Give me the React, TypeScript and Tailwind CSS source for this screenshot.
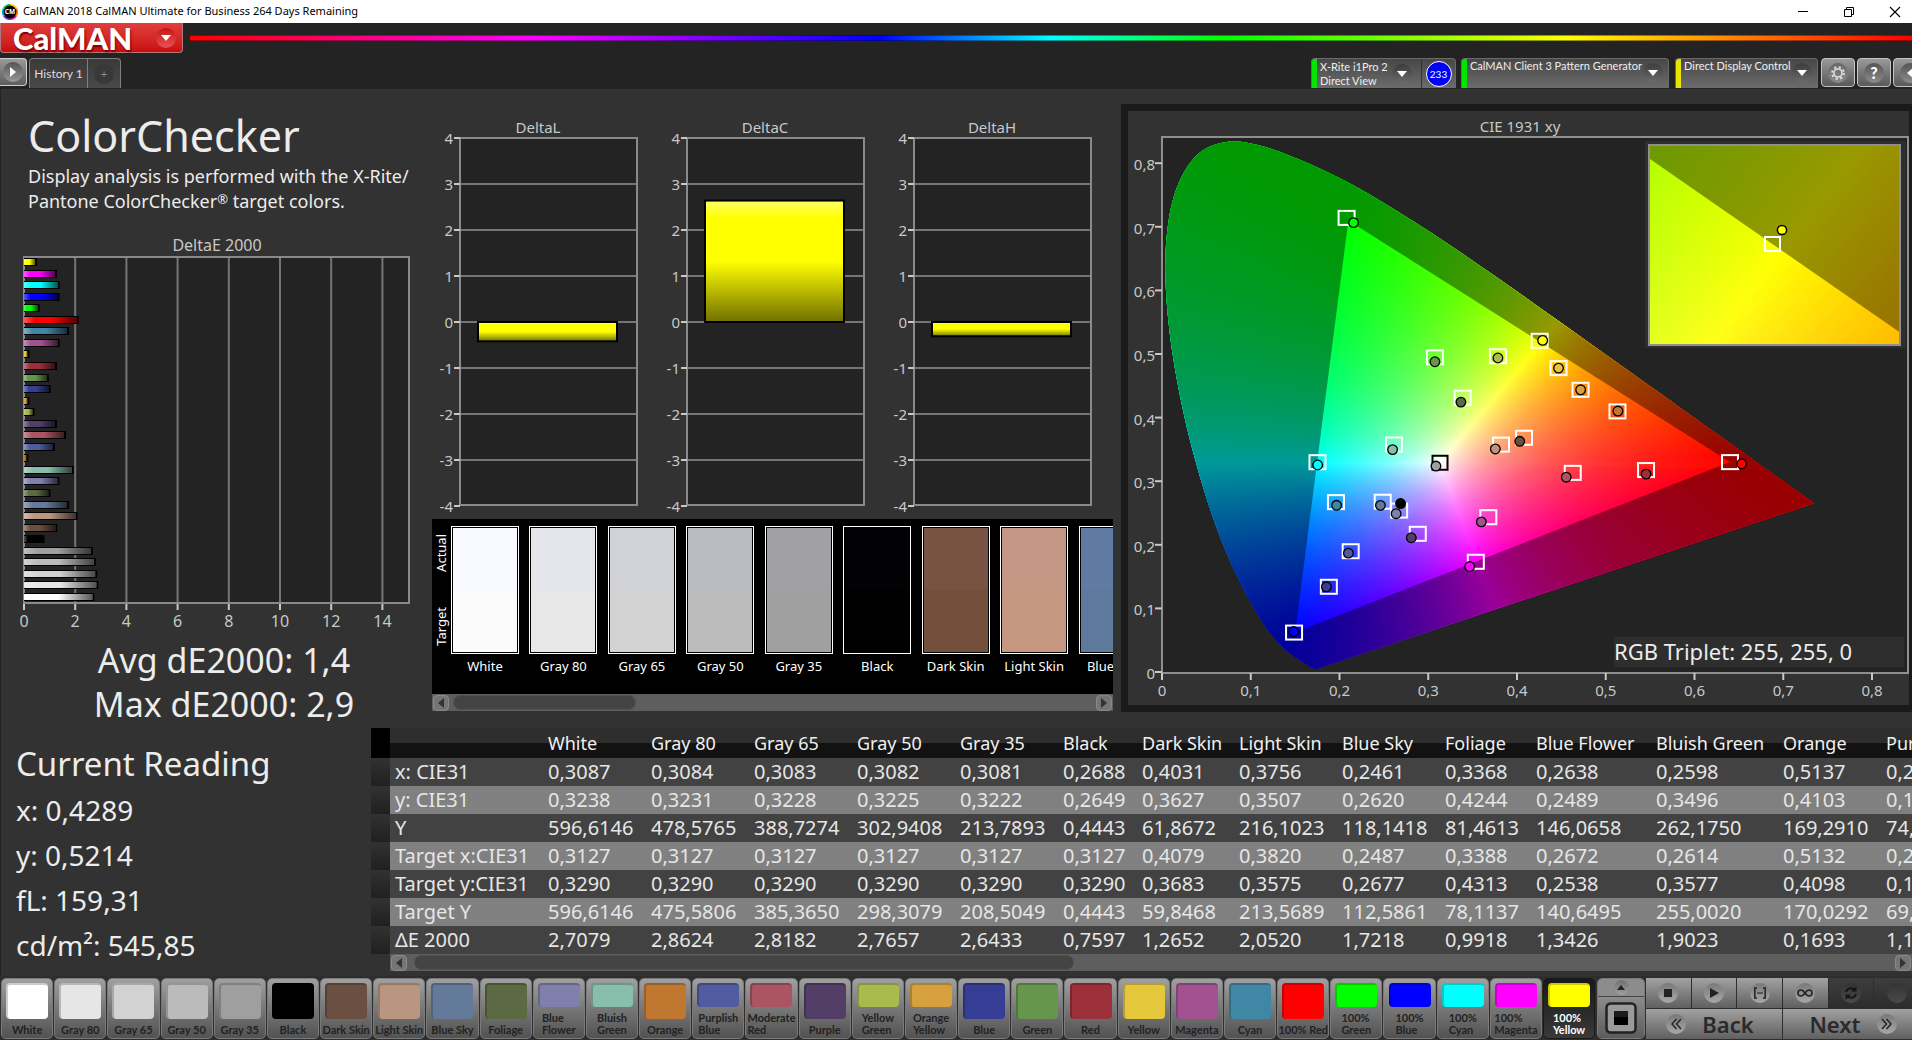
import React from 'react';

type Pt = [number, number];

const PATCHES: { name: string; lines: string[]; color: string; de: number }[] = [
  { name: 'White', lines: ['White'], color: '#ffffff', de: 2.7079 },
  { name: 'Gray 80', lines: ['Gray 80'], color: '#e6e6e6', de: 2.8624 },
  { name: 'Gray 65', lines: ['Gray 65'], color: '#d2d2d2', de: 2.8182 },
  { name: 'Gray 50', lines: ['Gray 50'], color: '#bbbbbb', de: 2.7657 },
  { name: 'Gray 35', lines: ['Gray 35'], color: '#9f9f9f', de: 2.6433 },
  { name: 'Black', lines: ['Black'], color: '#000000', de: 0.7597 },
  { name: 'Dark Skin', lines: ['Dark Skin'], color: '#6b5042', de: 1.2652 },
  { name: 'Light Skin', lines: ['Light Skin'], color: '#ba9580', de: 2.052 },
  { name: 'Blue Sky', lines: ['Blue Sky'], color: '#647a9a', de: 1.7218 },
  { name: 'Foliage', lines: ['Foliage'], color: '#5c6a43', de: 0.9918 },
  { name: 'Blue Flower', lines: ['Blue', 'Flower'], color: '#8080ad', de: 1.3426 },
  { name: 'Bluish Green', lines: ['Bluish', 'Green'], color: '#87bfac', de: 1.9023 },
  { name: 'Orange', lines: ['Orange'], color: '#c07730', de: 0.13 },
  { name: 'Purplish Blue', lines: ['Purplish', 'Blue'], color: '#4f5ca0', de: 1.17 },
  { name: 'Moderate Red', lines: ['Moderate', 'Red'], color: '#ab5462', de: 1.6 },
  { name: 'Purple', lines: ['Purple'], color: '#523e66', de: 1.25 },
  { name: 'Yellow Green', lines: ['Yellow', 'Green'], color: '#a9bb4c', de: 0.37 },
  { name: 'Orange Yellow', lines: ['Orange', 'Yellow'], color: '#d6a13c', de: 0.17 },
  { name: 'Blue', lines: ['Blue'], color: '#363d94', de: 1.0 },
  { name: 'Green', lines: ['Green'], color: '#66954c', de: 0.93 },
  { name: 'Red', lines: ['Red'], color: '#9b2f3a', de: 1.25 },
  { name: 'Yellow', lines: ['Yellow'], color: '#e4c73a', de: 0.17 },
  { name: 'Magenta', lines: ['Magenta'], color: '#a35291', de: 1.35 },
  { name: 'Cyan', lines: ['Cyan'], color: '#4087a6', de: 1.72 },
  { name: '100% Red', lines: ['100% Red'], color: '#ff0000', de: 2.1 },
  { name: '100% Green', lines: ['100%', 'Green'], color: '#00ff00', de: 0.57 },
  { name: '100% Blue', lines: ['100%', 'Blue'], color: '#0000ff', de: 1.35 },
  { name: '100% Cyan', lines: ['100%', 'Cyan'], color: '#00ffff', de: 1.35 },
  { name: '100% Magenta', lines: ['100%', 'Magenta'], color: '#ff00ff', de: 1.25 },
  { name: '100% Yellow', lines: ['100%', 'Yellow'], color: '#ffff00', de: 0.47 },
];

/* ---------- CIE diagram geometry ---------- */

const px = (x: number) => 1162 + x * 887.5;
const py = (y: number) => 672 - y * 636;

const PRIM: Pt[] = [[0.64, 0.33], [0.21, 0.71], [0.15, 0.062]];
const WHITE: Pt = [0.3127, 0.329];

const LOCUS: Pt[] = [
  [0.1741, 0.005], [0.1714, 0.0051], [0.1644, 0.0109], [0.1566, 0.0177], [0.144, 0.0297], [0.1241, 0.0578],
  [0.1096, 0.0868], [0.0913, 0.1327], [0.0687, 0.2007], [0.0454, 0.295], [0.0235, 0.4127], [0.0082, 0.5384],
  [0.0039, 0.6548], [0.0139, 0.7502], [0.0389, 0.812], [0.0743, 0.8338], [0.1142, 0.8262], [0.1547, 0.8059],
  [0.1929, 0.7816], [0.2296, 0.7543], [0.3016, 0.6923], [0.3731, 0.6245], [0.4441, 0.5547], [0.5125, 0.4866],
  [0.5752, 0.4242], [0.627, 0.3725], [0.6915, 0.3083], [0.7347, 0.2653],
];

function smoothPath(points: Pt[]) {
  const p = points.map(([x, y]) => [px(x), py(y)] as Pt);
  let d = `M${p[0][0]} ${p[0][1]}`;
  for (let i = 0; i < p.length - 1; i++) {
    const a = p[Math.max(i - 1, 0)];
    const b = p[i];
    const c = p[i + 1];
    const e = p[Math.min(i + 2, p.length - 1)];
    d += `C${b[0] + (c[0] - a[0]) / 6} ${b[1] + (c[1] - a[1]) / 6} ${c[0] - (e[0] - b[0]) / 6} ${c[1] - (e[1] - b[1]) / 6} ${c[0]} ${c[1]}`;
  }
  return d + 'Z';
}
const LOCUS_PATH = smoothPath(LOCUS);
const TRIANGLE_PATH = 'M' + PRIM.map(([x, y]) => `${px(x)} ${py(y)}`).join('L') + 'Z';

function bary([x, y]: Pt) {
  const [[x1, y1], [x2, y2], [x3, y3]] = PRIM;
  const det = (y2 - y3) * (x1 - x3) + (x3 - x2) * (y1 - y3);
  const a = ((y2 - y3) * (x - x3) + (x3 - x2) * (y - y3)) / det;
  const b = ((y3 - y1) * (x - x3) + (x1 - x3) * (y - y3)) / det;
  return [a, b, 1 - a - b];
}
const WB = bary(WHITE);

function colorAt(p: Pt) {
  const lin = bary(p).map((v, i) => Math.max(0, v / WB[i]));
  const top = Math.max(...lin);
  return `rgb(${lin.map((v) => Math.round((255 * v) / top)).join(',')})`;
}

const WEDGES = 480;
const STOPS = [0, 0.08, 0.2, 0.4, 0.6, 0.8, 1, 1.4, 2, 2.8];
const FIELD = Array.from({ length: WEDGES }, (_, i) => {
  const step = (2 * Math.PI) / WEDGES;
  const t = i * step;
  const dx = Math.cos(t) / 887.5;
  const dy = -Math.sin(t) / 636;
  const far = bary([WHITE[0] + dx, WHITE[1] + dy]);
  const edge = Math.min(...far.map((v, k) => (v < WB[k] ? WB[k] / (WB[k] - v) : Infinity)));
  const cx = px(WHITE[0]);
  const cy = py(WHITE[1]);
  const ray = (a: number) => `${cx + 900 * Math.cos(a)} ${cy + 900 * Math.sin(a)}`;
  return {
    r: edge * 2.8,
    d: `M${cx} ${cy}L${ray(t - step * 0.5)}L${ray(t + step * (i === WEDGES - 1 ? 0.5 : 3.5))}Z`,
    stops: STOPS.map((s) => ({
      o: s / 2.8,
      c: colorAt([WHITE[0] + dx * edge * s, WHITE[1] + dy * edge * s]),
    })),
  };
});

const TARGETS: Pt[] = [
  [0.208, 0.714], [0.4255, 0.5208], [0.3075, 0.4947], [0.3785, 0.4965], [0.4468, 0.4778], [0.4716, 0.4437],
  [0.5132, 0.4098], [0.3388, 0.4313], [0.2614, 0.3577], [0.1752, 0.3299], [0.382, 0.3575], [0.4079, 0.3683],
  [0.64, 0.33], [0.5454, 0.3175], [0.4628, 0.3131], [0.196, 0.2671], [0.2487, 0.2677], [0.2672, 0.2538],
  [0.3677, 0.2434], [0.2882, 0.2173], [0.2126, 0.1899], [0.3536, 0.1733], [0.188, 0.134], [0.1488, 0.062],
];
const MEASURED: [number, number, string][] = [
  [0.2158, 0.7066, '#00ff00'], [0.4289, 0.5214, '#ffff00'], [0.3075, 0.4878, '#66954c'], [0.3785, 0.4937, '#a9bb4c'],
  [0.4468, 0.4778, '#e4c73a'], [0.4717, 0.4437, '#d6a13c'], [0.5137, 0.4103, '#c07730'], [0.3368, 0.4244, '#5c6a43'],
  [0.2598, 0.3496, '#87bfac'], [0.1754, 0.3255, '#00ffff'], [0.3087, 0.3238, '#9f9f9f'], [0.3756, 0.3507, '#ba9580'],
  [0.4031, 0.3627, '#6b5042'], [0.6532, 0.3274, '#ff0000'], [0.5454, 0.3112, '#9b2f3a'], [0.4555, 0.3063, '#ab5462'],
  [0.1967, 0.2621, '#4087a6'], [0.2461, 0.262, '#647a9a'], [0.2688, 0.2649, '#000000'], [0.2638, 0.2489, '#8080ad'],
  [0.3598, 0.236, '#a35291'], [0.2809, 0.2111, '#523e66'], [0.21, 0.1869, '#4f5ca0'], [0.3466, 0.1658, '#ff00ff'],
  [0.1852, 0.134, '#363d94'], [0.1483, 0.0637, '#0000ff'],
];

function CieChart() {
  const ticks = [0, 1, 2, 3, 4, 5, 6, 7, 8];
  const label = (n: number) => (n === 0 ? '0' : `0,${n}`);
  return (
    <svg viewBox="1128 111 781 594" className="block w-full text-[15px]" role="img" aria-label="CIE 1931 xy">
      <defs>
        {FIELD.map((w, i) => (
          <radialGradient key={i} id={`w${i}`} gradientUnits="userSpaceOnUse" cx={px(WHITE[0])} cy={py(WHITE[1])} r={w.r}>
            {w.stops.map((s, k) => (
              <stop key={k} offset={s.o} stopColor={s.c} />
            ))}
          </radialGradient>
        ))}
        <clipPath id="locus"><path d={LOCUS_PATH} /></clipPath>
        <clipPath id="inset"><rect x="1650" y="146" width="249" height="198" /></clipPath>
        <g id="field">
          <circle cx={px(WHITE[0])} cy={py(WHITE[1])} r="40" fill="#fff" />
          {FIELD.map((w, i) => (
            <path key={i} d={w.d} fill={`url(#w${i})`} />
          ))}
          <path d={`M700 -300H2500V1200H700Z${TRIANGLE_PATH}`} fillRule="evenodd" fill="#000" opacity="0.4" />
        </g>
      </defs>
      <text x="1520" y="132" textAnchor="middle" fill="#c8c8c8">CIE 1931 xy</text>
      <rect x="1162" y="137" width="746" height="536" fill="#232323" stroke="#8f8f8f" strokeWidth="2" />
      <g clipPath="url(#locus)"><use href="#field" /></g>
      {ticks.map((n) => (
        <g key={n} fill="#c8c8c8">
          <rect x="1155" y={py(n / 10) - 1} width="7" height="2" />
          <rect x={px(n / 10) - 1} y="673" width="2" height="7" />
          <text x="1155" y={py(n / 10) + 7} textAnchor="end">{label(n)}</text>
          <text x={px(n / 10)} y="696" textAnchor="middle">{label(n)}</text>
        </g>
      ))}
      {TARGETS.map(([x, y], i) => (
        <rect key={i} x={px(x) - 8} y={py(y) - 7} width="16" height="14" fill="none" stroke="#fff" strokeWidth="2" />
      ))}
      <rect x={px(WHITE[0]) - 7} y={py(WHITE[1]) - 7} width="15" height="14" fill="none" stroke="#000" strokeWidth="2" />
      {MEASURED.map(([x, y, c], i) => (
        <circle key={i} cx={px(x)} cy={py(y)} r="4.8" fill={c} stroke="#000" strokeWidth="1.3" />
      ))}
      <rect x="1645" y="141" width="261" height="207" fill="#2e2e2e" />
      <g clipPath="url(#inset)">
        <g transform="translate(1772 243) scale(4.2 4.6) translate(-1539 -341)"><use href="#field" /></g>
      </g>
      <rect x="1649" y="145" width="251" height="200" fill="none" stroke="#8f8f8f" strokeWidth="2" />
      <rect x="1765" y="237" width="15" height="14" fill="none" stroke="#fff" strokeWidth="2" />
      <circle cx="1782" cy="230" r="4.6" fill="#ffff00" stroke="#000" strokeWidth="1.5" />
      <rect x="1614" y="637" width="290" height="30" fill="#2e2e2e" />
      <text x="1614" y="660" fontSize="22" fill="#ececec">RGB Triplet: 255, 255, 0</text>
    </svg>
  );
}

/* ---------- Delta charts ---------- */

function DeltaEChart() {
  const unit = 25.6;
  const bars = [...PATCHES].reverse();
  return (
    <svg viewBox="0 235 432 400" width="432" height="400" className="block text-[16px]" role="img" aria-label="DeltaE 2000">
      <defs>
        <linearGradient id="hshade">
          <stop offset="0" stopColor="#fff" stopOpacity="0.35" />
          <stop offset="0.2" stopColor="#fff" stopOpacity="0" />
          <stop offset="0.5" stopColor="#000" stopOpacity="0" />
          <stop offset="1" stopColor="#000" stopOpacity="0.65" />
        </linearGradient>
      </defs>
      <text x="217" y="251" textAnchor="middle" fill="#c8c8c8">DeltaE 2000</text>
      <rect x="24" y="257" width="385" height="346" fill="#232323" stroke="#8a8a8a" strokeWidth="2" />
      {[0, 2, 4, 6, 8, 10, 12, 14].map((n) => (
        <g key={n}>
          {n > 0 && <rect x={23 + n * unit} y="258" width="2" height="344" fill="#757575" />}
          <rect x={23 + n * unit} y="604" width="2" height="6" fill="#c8c8c8" />
          <text x={24 + n * unit} y="627" textAnchor="middle" fill="#c8c8c8">{n}</text>
        </g>
      ))}
      {bars.map((b, i) => {
        const y = 258 + Math.round(i * 11.55);
        const w = Math.max(b.de * unit, 3);
        return (
          <g key={b.name}>
            <rect x="24" y={y} width={w + 1} height="8" fill="#000" />
            <rect x="24" y={y + 1} width={w - 1} height="6" fill={b.color} />
            <rect x="24" y={y + 1} width={w - 1} height="6" fill="url(#hshade)" />
          </g>
        );
      })}
    </svg>
  );
}

function DeltaChart({ title, value }: { title: string; value: number }) {
  const y = (v: number) => 322 - v * 46;
  const top = value > 0 ? y(value) : 322;
  const h = Math.abs(value) * 46;
  return (
    <svg viewBox="0 115 227 400" className="block min-w-0 flex-1 text-[15px]" role="img" aria-label={title}>
      <defs>
        <linearGradient id="vshade" x1="0" y1="0" x2="0" y2="1">
          <stop offset="0" stopColor="#ffff66" />
          <stop offset="0.15" stopColor="#ffff00" />
          <stop offset="0.5" stopColor="#ffff00" />
          <stop offset="1" stopColor="#707000" />
        </linearGradient>
      </defs>
      <text x="106" y="133" textAnchor="middle" fill="#c8c8c8">{title}</text>
      <rect x="28" y="138" width="177" height="367" fill="#232323" stroke="#8a8a8a" strokeWidth="2" />
      {[4, 3, 2, 1, 0, -1, -2, -3, -4].map((n) => (
        <g key={n}>
          {Math.abs(n) < 4 && <rect x="29" y={y(n) - 1} width="175" height="2" fill="#757575" />}
          <rect x="22" y={y(n) - 1} width="6" height="2" fill="#c8c8c8" />
          <text x="21" y={y(n) + 6} textAnchor="end" fill="#c8c8c8">{n}</text>
        </g>
      ))}
      <rect x="46" y={top} width="139" height={h} fill="url(#vshade)" stroke="#000" strokeWidth="2" />
    </svg>
  );
}

/* ---------- Swatch strip ---------- */

const STRIP = [
  { name: 'White', actual: '#f8faff', target: '#fbfbfb' },
  { name: 'Gray 80', actual: '#e5e6eb', target: '#e7e7e7' },
  { name: 'Gray 65', actual: '#d0d2d7', target: '#d3d3d3' },
  { name: 'Gray 50', actual: '#babcc2', target: '#bcbcbc' },
  { name: 'Gray 35', actual: '#a1a0a5', target: '#a0a0a0' },
  { name: 'Black', actual: '#020204', target: '#000000' },
  { name: 'Dark Skin', actual: '#775344', target: '#73503c' },
  { name: 'Light Skin', actual: '#c49785', target: '#c59680' },
  { name: 'Blue Sky', actual: '#5f7ba3', target: '#5d7a9c' },
];

function ScrollBar({ label, thumb }: { label: string; thumb: string }) {
  const btn = 'flex h-4 w-4 shrink-0 items-center justify-center rounded border border-[#8a8a8a] bg-[#757575]';
  return (
    <div className="flex h-[17px] items-center gap-1 bg-[#5e5e5e] px-px" role="group" aria-label={label}>
      <button className={btn} aria-label="Scroll left">
        <svg width="6" height="10" viewBox="0 0 6 10"><path d="M6 0v10L0 5z" fill="#333" /></svg>
      </button>
      <div className="flex-1">
        <div className={`h-[15px] rounded-lg border border-[#505050] bg-[#444] ${thumb}`} />
      </div>
      <button className={btn} aria-label="Scroll right">
        <svg width="6" height="10" viewBox="0 0 6 10"><path d="M0 0v10l6-5z" fill="#333" /></svg>
      </button>
    </div>
  );
}

function SwatchStrip() {
  return (
    <div className="mt-1 bg-black">
      <div className="flex h-[175px] overflow-hidden pt-[7px] text-[13px] text-white">
        <div className="flex h-32 w-[19px] shrink-0 flex-col items-start justify-between py-2 pl-px leading-4">
          <span className="rotate-180 [writing-mode:vertical-rl]">Actual</span>
          <span className="rotate-180 [writing-mode:vertical-rl]">Target</span>
        </div>
        <div className="grid w-[706px] shrink-0 grid-cols-9">
          {STRIP.map((s) => (
            <div key={s.name} className="w-[68px]">
              <div className="flex h-32 flex-col border border-white">
                <div className="flex flex-1 flex-col border border-black/25">
                  <div className="flex-1" style={{ background: s.actual }} />
                  <div className="flex-1" style={{ background: s.target }} />
                </div>
              </div>
              <div className="mt-1 text-center leading-4 whitespace-nowrap">{s.name}</div>
            </div>
          ))}
        </div>
      </div>
      <ScrollBar label="Swatches" thumb="w-[183px]" />
    </div>
  );
}

/* ---------- Data table ---------- */

const HEADS = ['White', 'Gray 80', 'Gray 65', 'Gray 50', 'Gray 35', 'Black', 'Dark Skin', 'Light Skin', 'Blue Sky', 'Foliage', 'Blue Flower', 'Bluish Green', 'Orange', 'Purplish Blue'];
const COLS = [103, 103, 103, 103, 103, 79, 97, 103, 103, 91, 120, 127, 103, 140];
const ROWS: [string, string[]][] = [
  ['x: CIE31', ['0,3087', '0,3084', '0,3083', '0,3082', '0,3081', '0,2688', '0,4031', '0,3756', '0,2461', '0,3368', '0,2638', '0,2598', '0,5137', '0,2100']],
  ['y: CIE31', ['0,3238', '0,3231', '0,3228', '0,3225', '0,3222', '0,2649', '0,3627', '0,3507', '0,2620', '0,4244', '0,2489', '0,3496', '0,4103', '0,1869']],
  ['Y', ['596,6146', '478,5765', '388,7274', '302,9408', '213,7893', '0,4443', '61,8672', '216,1023', '118,1418', '81,4613', '146,0658', '262,1750', '169,2910', '74,1120']],
  ['Target x:CIE31', ['0,3127', '0,3127', '0,3127', '0,3127', '0,3127', '0,3127', '0,4079', '0,3820', '0,2487', '0,3388', '0,2672', '0,2614', '0,5132', '0,2126']],
  ['Target y:CIE31', ['0,3290', '0,3290', '0,3290', '0,3290', '0,3290', '0,3290', '0,3683', '0,3575', '0,2677', '0,4313', '0,2538', '0,3577', '0,4098', '0,1899']],
  ['Target Y', ['596,6146', '475,5806', '385,3650', '298,3079', '208,5049', '0,4443', '59,8468', '213,5689', '112,5861', '78,1137', '140,6495', '255,0020', '170,0292', '69,8240']],
  ['ΔE 2000', ['2,7079', '2,8624', '2,8182', '2,7657', '2,6433', '0,7597', '1,2652', '2,0520', '1,7218', '0,9918', '1,3426', '1,9023', '0,1693', '1,1700']],
];

function DataTable() {
  return (
    <div className="col-span-3 col-start-2 min-w-0 overflow-hidden">
      <table className="w-[1650px] table-fixed border-collapse text-left text-[20px] whitespace-nowrap text-[#e6e6e6]">
        <colgroup>
          <col style={{ width: 19 }} />
          <col style={{ width: 153 }} />
          {COLS.map((w, i) => (
            <col key={i} style={{ width: w }} />
          ))}
        </colgroup>
        <thead>
          <tr className="h-[30px] bg-linear-to-b from-[#2e2e2e] from-50% to-[#121212] to-50% text-[18px] leading-7 text-[#f0f0f0]">
            <td className="bg-black p-0" />
            <td className="p-0" />
            {HEADS.map((h) => (
              <th key={h} scope="col" className="py-0 pr-0 pl-[5px] font-normal">{h}</th>
            ))}
          </tr>
        </thead>
        <tbody>
          {ROWS.map(([name, cells]) => (
            <tr key={name} className="h-7 bg-[#424242] leading-7 even:bg-[#808080]">
              <td className="bg-linear-to-b from-[#323232] to-[#202020] p-0" />
              <th scope="row" className="py-0 pr-0 pl-[5px] font-normal">{name}</th>
              {cells.map((c, i) => (
                <td key={i} className="py-0 pr-0 pl-[5px]">{c}</td>
              ))}
            </tr>
          ))}
        </tbody>
      </table>
      <div className="ml-[19px]">
        <ScrollBar label="Readings" thumb="ml-[3px] w-[660px]" />
      </div>
    </div>
  );
}

/* ---------- Header ---------- */

function Drop({ className = '' }: { className?: string }) {
  return (
    <span className={`flex h-5 w-5 shrink-0 items-center justify-center rounded-full bg-linear-to-b from-[#3c3c3c] to-[#6c6c6c] ${className}`}>
      <svg width="10" height="6" viewBox="0 0 10 6"><path d="M0 0h10L5 6z" fill="#fff" /></svg>
    </span>
  );
}

function TitleBar() {
  return (
    <div className="flex h-[23px] items-center bg-white text-black">
      <svg width="16" height="16" viewBox="0 0 16 16" className="ml-[2px]">
        <path d="M8 0a8 8 0 0 1 7 4L8 8z" fill="#f5d000" />
        <path d="M15 4a8 8 0 0 1 0 8L8 8z" fill="#ff7a00" />
        <path d="M15 12a8 8 0 0 1-7 4V8z" fill="#e0119d" />
        <path d="M8 16a8 8 0 0 1-7-4l7-4z" fill="#5b35e0" />
        <path d="M1 12a8 8 0 0 1 0-8l7 4z" fill="#00a6e0" />
        <path d="M1 4a8 8 0 0 1 7-4v8z" fill="#19c23c" />
        <circle cx="8" cy="8" r="6.4" fill="#000" />
        <text x="8" y="10.4" textAnchor="middle" fontSize="6.5" fontWeight="700" fill="#fff">CM</text>
      </svg>
      <h1 className="ml-[5px] text-[11px]">CalMAN 2018 CalMAN Ultimate for Business 264 Days Remaining</h1>
      <div className="mr-[11px] ml-auto flex gap-[34px]">
        <button aria-label="Minimize"><svg width="12" height="12" viewBox="0 0 12 12"><path d="M1 5.500h10" stroke="#000" /></svg></button>
        <button aria-label="Restore"><svg width="12" height="12" viewBox="0 0 12 12" fill="none" stroke="#000"><path d="M1.500 3.500h7v7h-7zM3.500 3.500v-2h7v7h-2" /></svg></button>
        <button aria-label="Close"><svg width="12" height="12" viewBox="0 0 12 12"><path d="M1 1l10 10M11 1L1 11" stroke="#000" strokeWidth="1.100" /></svg></button>
      </div>
    </div>
  );
}

function Header() {
  const device = 'flex rounded-t border-x border-t border-[#6a6a6a] bg-linear-to-b from-[#474747] to-[#6c6c6c] text-left leading-[14px] text-[#eee] overflow-hidden';
  const square = 'flex h-[29px] w-[34px] shrink-0 items-center justify-center rounded border border-[#c4c4c4] bg-linear-to-b from-[#999] to-[#5a5a5a]';
  return (
    <header className="bg-[#232323]">
      <div className="flex h-[35px]">
        <button className="flex h-[30px] w-[183px] items-center justify-between rounded-b border border-t-0 border-[#b07a7a] bg-linear-to-b from-[#e23c3c] to-[#c80c0c] pr-[6px] pl-3 [font-family:Lato,sans-serif] text-[31px] leading-[28px] font-black text-white">
          <span className="[text-shadow:1px_2px_2px_#7a0000]">CalMAN</span>
          <span className="flex h-5 w-5 items-center justify-center rounded-full bg-linear-to-b from-[#c41010] to-[#e85050]">
            <svg width="10" height="6" viewBox="0 0 10 6"><path d="M0 0h10L5 6z" fill="#fff" /></svg>
          </span>
        </button>
        <div className="mt-3 ml-[7px] h-[6px] flex-1 border-y border-black/40 bg-[linear-gradient(to_right,#f00,#f0f_20%,#00f_40%,#0ff_50%,#0f0_60%,#ff0_80%,#f00)]" />
      </div>
      <div className="flex h-[31px] overflow-hidden [font-family:Lato,sans-serif]">
        <button aria-label="Show workflow" className="flex h-[28px] w-[27px] items-center justify-center rounded-r border border-l-0 border-[#d0d0d0] bg-linear-to-b from-[#9a9a9a] to-[#5e5e5e]">
          <span className="flex h-5 w-5 items-center justify-center rounded-full bg-linear-to-b from-[#555] to-[#9a9a9a]">
            <svg width="6" height="10" viewBox="0 0 6 10"><path d="M0 0v10l6-5z" fill="#fff" /></svg>
          </span>
        </button>
        <div className="ml-[2px] flex h-[30px] rounded-t border-x border-t border-[#808080] bg-linear-to-b from-[#3a3a3a] to-[#484848] text-[12px] text-[#ddd]">
          <button className="w-[58px] border-r border-[#808080]">History 1</button>
          <button aria-label="Add history" className="flex w-8 items-center justify-center text-[#888]">
            <span className="flex h-5 w-5 items-center justify-center rounded-full bg-[#383838]">+</span>
          </button>
        </div>
        <div className="ml-auto flex h-[30px] text-[11px]">
          <div className={`${device} w-[145px]`}>
            <span className="w-[5px] bg-[#00e600]" />
            <button className="flex flex-1 items-center justify-between pr-[9px] pl-[3px] text-left">
              <span className="whitespace-nowrap">X-Rite i1Pro 2<br />Direct View</span>
              <Drop />
            </button>
            <span className="flex w-[34px] items-center justify-center border-l border-[#333]">
              <span className="flex h-[26px] w-[26px] items-center justify-center rounded-full border border-white bg-[#0000ff] text-[10px] text-white">233</span>
            </span>
          </div>
          <div className={`${device} ml-[5px] w-[208px]`}>
            <span className="w-[5px] bg-[#00e600]" />
            <button className="flex flex-1 justify-between pr-[5px] pl-[3px] text-left whitespace-nowrap">
              CalMAN Client 3 Pattern Generator
              <Drop className="mt-1" />
            </button>
          </div>
          <div className={`${device} ml-[6px] w-[143px]`}>
            <span className="w-[5px] bg-[#e6e600]" />
            <button className="flex flex-1 justify-between pr-[5px] pl-[3px] text-left whitespace-nowrap">
              Direct Display Control
              <Drop className="mt-1" />
            </button>
          </div>
          <div className="ml-[3px] flex w-[91px] gap-[2px] overflow-hidden">
            <button aria-label="Settings" className={square}>
              <span className="flex h-5 w-5 items-center justify-center rounded-full bg-linear-to-b from-[#666] to-[#8c8c8c]">
                <svg width="16" height="16" viewBox="0 0 16 16" fill="none" stroke="#ddd">
                  <circle cx="8" cy="8" r="4" strokeWidth="1.600" />
                  <circle cx="8" cy="8" r="5.900" strokeWidth="2" strokeDasharray="2.300 2.330" />
                </svg>
              </span>
            </button>
            <button aria-label="Help" className={square}>
              <span className="flex h-5 w-5 items-center justify-center rounded-full bg-linear-to-b from-[#555] to-[#8c8c8c] text-[16px] font-black text-white">?</span>
            </button>
            <button aria-label="Collapse" className={square}>
              <span className="flex h-5 w-5 items-center justify-center rounded-full bg-linear-to-b from-[#555] to-[#8c8c8c]">
                <svg width="6" height="10" viewBox="0 0 6 10"><path d="M6 0v10L0 5z" fill="#fff" /></svg>
              </span>
            </button>
          </div>
        </div>
      </div>
    </header>
  );
}

/* ---------- Footer ---------- */

function PatchButton({ lines, color, selected }: { lines: string[]; color: string; selected: boolean }) {
  return (
    <button
      className={`flex min-w-0 flex-1 flex-col items-center rounded-[5px] border pt-1 ${
        selected
          ? 'border-[#1a1a1a] bg-linear-to-b from-[#181818] to-[#3a3a3a] text-white'
          : 'border-[#7a7a7a] bg-linear-to-b from-[#a0a0a0] to-[#525252] text-[#222]'
      }`}
    >
      <span
        className={`w-[42px] rounded-[4px] border-t-2 border-l-2 border-black/20 bg-clip-border ${lines.length > 1 ? 'h-6' : 'h-9'}`}
        style={{ backgroundColor: color }}
      />
      <span className="mt-auto mb-[2px] text-left text-[11px] leading-3 font-bold whitespace-nowrap">
        {lines.map((l) => (
          <span key={l} className="block">{l}</span>
        ))}
      </span>
    </button>
  );
}

function Disc({ children, dark = false }: { children?: React.ReactNode; dark?: boolean }) {
  return (
    <span className={`flex h-5 w-5 items-center justify-center rounded-full bg-linear-to-b ${dark ? 'from-[#333] to-[#4a4a4a]' : 'from-[#787878] to-[#a8a8a8]'}`}>
      {children}
    </span>
  );
}

function Footer() {
  const key = 'flex items-center justify-center bg-linear-to-b from-[#a2a2a2] to-[#606060]';
  const off = 'flex items-center justify-center bg-linear-to-b from-[#3e3e3e] to-[#2c2c2c]';
  return (
    <footer className="flex h-16 bg-[#2e2e2e] pt-[2px] [font-family:Lato,sans-serif]">
      <div className="flex h-[61px] min-w-0 flex-1 gap-px pl-px">
        {PATCHES.map((p, i) => (
          <PatchButton key={p.name} lines={p.lines} color={p.color} selected={i === PATCHES.length - 1} />
        ))}
      </div>
      <div className="ml-[2px] flex h-[61px] w-12 flex-col overflow-hidden rounded-[5px] border border-[#7a7a7a]">
        <button aria-label="Expand" className="flex h-[18px] items-center justify-center border-b border-[#444] bg-[#8c8c8c]">
          <span className="flex h-[15px] w-[15px] items-center justify-center rounded-full bg-linear-to-b from-[#707070] to-[#a0a0a0]">
            <svg width="8" height="5" viewBox="0 0 8 5"><path d="M4 0l4 5H0z" fill="#222" /></svg>
          </span>
        </button>
        <button aria-label="Stop pattern" className="flex flex-1 items-center justify-center bg-linear-to-b from-[#8c8c8c] to-[#5c5c5c]">
          <svg width="32" height="32" viewBox="0 0 32 32">
            <rect x="1.500" y="1.500" width="29" height="29" rx="4" fill="#9a9a9a" stroke="#222" strokeWidth="2.500" />
            <rect x="9" y="9" width="14" height="14" fill="#000" />
            <rect x="9" y="9" width="14" height="6" fill="#1c1c1c" />
          </svg>
        </button>
      </div>
      <div className="ml-px w-[266px] overflow-hidden">
        <div className="grid h-[61px] w-[273px] grid-cols-6 grid-rows-2 gap-px">
          <button aria-label="Stop" className={key}><Disc><svg width="8" height="8"><rect width="8" height="8" fill="#222" /></svg></Disc></button>
          <button aria-label="Play" className={key}><Disc><svg width="10" height="10" viewBox="0 0 10 10"><path d="M1 0v10l9-5z" fill="#222" /></svg></Disc></button>
          <button aria-label="Range" className={key}>
            <Disc>
              <svg width="14" height="12" viewBox="0 0 14 12" fill="none" stroke="#222" strokeWidth="1.500"><path d="M4 1H1.800v10H4M10 1h2.200v10H10M4.300 6h1.400M6.300 6h1.400M8.300 6h1.400" /></svg>
            </Disc>
          </button>
          <button aria-label="Loop" className={key}>
            <Disc>
              <svg width="16" height="8" viewBox="0 0 16 8" fill="none" stroke="#222" strokeWidth="1.600"><path d="M8 4C6.500 1.800 5.500 1 4 1a3 3 0 0 0 0 6c1.500 0 2.500-.8 4-3s2.500-3 4-3a3 3 0 0 1 0 6c-1.500 0-2.500-.8-4-3z" /></svg>
            </Disc>
          </button>
          <button aria-label="Refresh" className={off}>
            <Disc dark>
              <svg width="14" height="14" viewBox="0 0 14 14" fill="none" stroke="#161616" strokeWidth="2.200"><path d="M2 6a5 5 0 0 1 8-2.600M12 8a5 5 0 0 1-8 2.600" /><path d="M12.500 0v5.500H7zM1.500 14V8.500H7z" fill="#161616" stroke="none" /></svg>
            </Disc>
          </button>
          <button aria-label="Unavailable" className={off}><Disc dark /></button>
          <button className={`${key} col-span-3 gap-4 pr-2 [font-family:'Noto_Sans',sans-serif] text-[22px] font-semibold text-[#2a2a2a]`}>
            <Disc><svg width="11" height="12" viewBox="0 0 11 12" fill="none" stroke="#222" strokeWidth="1.400"><path d="M5.500 1L1 6l4.500 5M10 1L5.500 6l4.500 5" /></svg></Disc>
            Back
          </button>
          <button className={`${key} col-span-3 gap-4 pl-1 [font-family:'Noto_Sans',sans-serif] text-[22px] font-semibold text-[#2a2a2a]`}>
            Next
            <Disc><svg width="11" height="12" viewBox="0 0 11 12" fill="none" stroke="#222" strokeWidth="1.400"><path d="M1 1l4.500 5L1 11M5.500 1L10 6l-4.500 5" /></svg></Disc>
          </button>
        </div>
      </div>
    </footer>
  );
}

export default function App() {
  return (
    <div className="flex min-h-screen flex-col overflow-hidden bg-[#323232] text-[#ececec] [font-family:'Noto_Sans',sans-serif]">
      <TitleBar />
      <Header />
      <main className="grid flex-1 grid-cols-[371px_61px_681fr_799fr] grid-rows-[548px_91px_auto] shadow-[inset_1px_0_#222]">
        <section className="col-span-2 pt-[19px]">
          <h2 className="pl-7 text-[43px] leading-[56px]">ColorChecker</h2>
          <p className="pl-7 text-[18px] leading-[25px]">
            Display analysis is performed with the X-Rite/
            <br />
            Pantone ColorChecker<span className="align-[4px] text-[13px] leading-none">®</span> target colors.
          </p>
          <div className="mt-[21px]"><DeltaEChart /></div>
        </section>
        <section className="col-start-3 row-span-2 row-start-1 min-w-0 pt-[26px]">
          <div className="flex">
            <DeltaChart title="DeltaL" value={-0.42} />
            <DeltaChart title="DeltaC" value={2.64} />
            <DeltaChart title="DeltaH" value={-0.31} />
          </div>
          <SwatchStrip />
        </section>
        <section className="col-start-4 row-span-2 row-start-1 min-w-0 pt-[15px] pl-2">
          <div className="border-7 border-r-3 border-[#1a1a1a]"><CieChart /></div>
        </section>
        <section className="col-span-2 col-start-1 row-start-2 pt-px pl-4 text-center text-[34px] leading-[44px]">
          <p>Avg dE2000: 1,4</p>
          <p>Max dE2000: 2,9</p>
        </section>
        <section className="col-start-1 pt-3 pl-4 text-[28px] leading-[45px]">
          <h3 className="text-[33px] leading-[48px]">Current Reading</h3>
          <p>x: 0,4289</p>
          <p>y: 0,5214</p>
          <p>fL: 159,31</p>
          <p>cd/m²: 545,85</p>
        </section>
        <DataTable />
      </main>
      <Footer />
    </div>
  );
}
